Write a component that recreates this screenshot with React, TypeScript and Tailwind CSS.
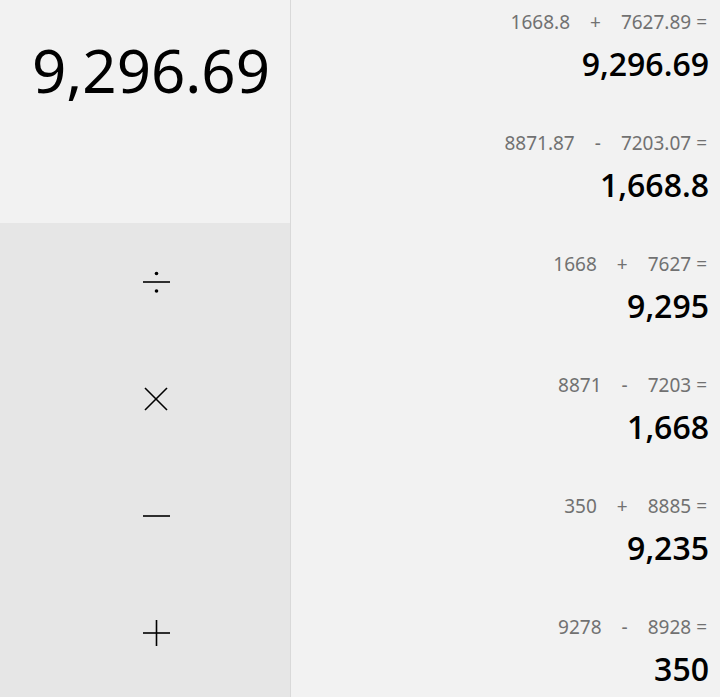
import React from 'react';

type HistoryItem = { a: string; op: string; b: string; result: string };

const history: HistoryItem[] = [
  { a: '1668.8', op: '+', b: '7627.89', result: '9,296.69' },
  { a: '8871.87', op: '-', b: '7203.07', result: '1,668.8' },
  { a: '1668', op: '+', b: '7627', result: '9,295' },
  { a: '8871', op: '-', b: '7203', result: '1,668' },
  { a: '350', op: '+', b: '8885', result: '9,235' },
  { a: '9278', op: '-', b: '8928', result: '350' },
];

const OpIcon = ({ kind }: { kind: 'div' | 'mul' | 'sub' | 'add' }) => (
  <svg width="28" height="28" viewBox="0 0 28 28" fill="none" stroke="#000" strokeWidth="1.6">
    {kind === 'div' && (
      <>
        <line x1="1" y1="14" x2="28" y2="14" />
        <circle cx="14.5" cy="5.5" r="1.8" fill="#000" stroke="none" />
        <circle cx="14.5" cy="23" r="1.8" fill="#000" stroke="none" />
      </>
    )}
    {kind === 'mul' && (
      <>
        <line x1="3" y1="3" x2="25" y2="25" />
        <line x1="25" y1="3" x2="3" y2="25" />
      </>
    )}
    {kind === 'sub' && <line x1="1" y1="14" x2="28" y2="14" />}
    {kind === 'add' && (
      <>
        <line x1="1" y1="14" x2="28" y2="14" />
        <line x1="14.5" y1="1" x2="14.5" y2="27" />
      </>
    )}
  </svg>
);

export default function App() {
  return (
    <div className="flex w-[720px] h-[697px] overflow-hidden bg-[#f2f2f2] text-black font-['Noto_Sans',sans-serif]">
      {/* Left: display + operators */}
      <div className="w-[290px] flex flex-col shrink-0">
        <div className="h-[223px] bg-[#f2f2f2] flex justify-end pr-[20px] pt-[40px]">
          <span className="text-[60px] leading-none">9,296.69</span>
        </div>
        <div className="flex-1 bg-[#e6e6e6] grid grid-rows-[repeat(4,117px)]">
          {(['div', 'mul', 'sub', 'add'] as const).map((k) => (
            <button key={k} className="flex items-center justify-center pl-[22px]">
              <OpIcon kind={k} />
            </button>
          ))}
        </div>
      </div>

      {/* History */}
      <div className="flex-1 border-l border-[#d9d9d9] flex flex-col pr-[13px]">
        {history.map((h, i) => (
          <div key={i} className="h-[121px] shrink-0 flex flex-col items-end pt-[9px]">
            <div className="flex items-center gap-[20px] text-[19px] text-[#717171] leading-[26px]">
              <span>{h.a}</span>
              <span>{h.op}</span>
              <span>{h.b} =</span>
            </div>
            <div className="font-['Open_Sans',sans-serif] text-[32px] font-semibold leading-[40px] mt-[9px] mr-[-2px]">
              {h.result}
            </div>
          </div>
        ))}
      </div>
    </div>
  );
}
